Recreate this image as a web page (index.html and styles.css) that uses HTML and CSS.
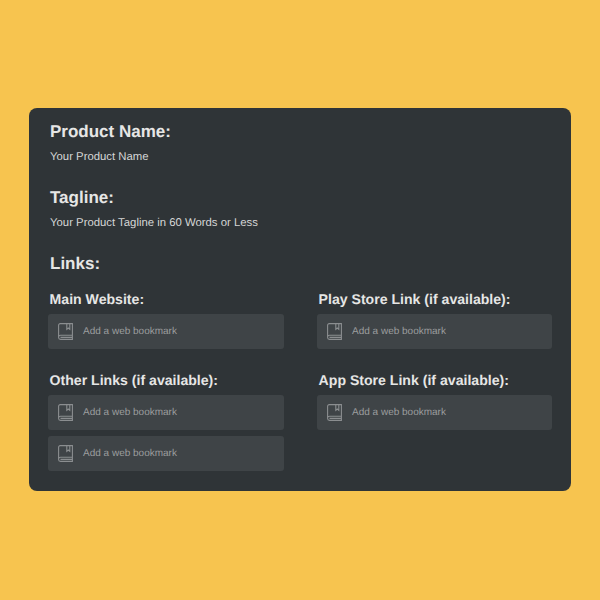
FILE: index.html
```html
<!DOCTYPE html>
<html lang="en">

<head>
    <meta charset="utf-8" />
    <title>Product form</title>
    <link rel="stylesheet" href="styles.css">
</head>

<body>
    <svg class="defs" width="0" height="0">
        <symbol id="book" viewBox="0 0 15 17">
            <path d="M.6 2.200v12.300c0 1.100.8 1.900 1.900 1.900h11.900V.6H2.200C1.300.6.600 1.300.600 2.200zM.6 14.200c0-1.100.8-1.900 1.900-1.900h11.900M2.500 14.400h11.900M8.800.6v5.700l1.500-1.300 1.500 1.300V.6" />
        </symbol>
    </svg>

    <main class="card">
        <section class="block">
            <h2>Product Name:</h2>
            <p>Your Product Name</p>
        </section>
        <section class="block">
            <h2>Tagline:</h2>
            <p>Your Product Tagline in 60 Words or Less</p>
        </section>
        <h2 class="links-title">Links:</h2>
        <div class="links">
            <div class="group">
                <h3>Main Website:</h3>
                <div class="field"><svg class="icon"><use href="#book" /></svg><span>Add a web bookmark</span></div>
            </div>
            <div class="group">
                <h3>Play Store Link (if available):</h3>
                <div class="field"><svg class="icon"><use href="#book" /></svg><span>Add a web bookmark</span></div>
            </div>
            <div class="group">
                <h3>Other Links (if available):</h3>
                <div class="field"><svg class="icon"><use href="#book" /></svg><span>Add a web bookmark</span></div>
                <div class="field"><svg class="icon"><use href="#book" /></svg><span>Add a web bookmark</span></div>
            </div>
            <div class="group">
                <h3>App Store Link (if available):</h3>
                <div class="field"><svg class="icon"><use href="#book" /></svg><span>Add a web bookmark</span></div>
            </div>
        </div>
    </main>
</body>

</html>
```

FILE: styles.css
```css
html,
body {
    height: 100%;
}

body {
    margin: 0;
    background-color: #f7c44f;
    font-family: "Liberation Sans", Arial, sans-serif;
    text-rendering: geometricPrecision;
    display: flex;
    align-items: center;
    justify-content: center;
}

.defs {
    display: none;
}

.card {
    box-sizing: border-box;
    width: 542px;
    height: 383px;
    margin-top: -1px;
    padding: 14px 19px 0 19px;
    background-color: #2f3437;
    border-radius: 8px;
    color: #e6e6e5;
}

h2 {
    font-size: 17px;
    line-height: 20px;
    font-weight: bold;
    margin: 0 0 0 2px;
}

h3 {
    font-size: 14.100px;
    line-height: 16px;
    font-weight: bold;
    margin: 0 0 7px 1.600px;
}

.block {
    height: 66px;
}

.block p {
    font-size: 11.350px;
    line-height: 14px;
    margin: 8px 0 0 2px;
    color: #d5d6d6;
}

.links-title {
    margin-bottom: 17px;
}

.links {
    display: grid;
    grid-template-columns: 236px 235px;
    column-gap: 33px;
    row-gap: 23px;
}

.group {
    display: flex;
    flex-direction: column;
    gap: 5.500px;
}

.group h3 {
    margin-bottom: 1.500px;
}

.field {
    height: 35px;
    display: flex;
    align-items: center;
    gap: 10px;
    padding-left: 10px;
    background-color: #3f4447;
    border-radius: 3px;
    font-size: 10px;
    color: #9b9d9e;
}

.icon {
    width: 15px;
    height: 17px;
    fill: none;
    stroke: #8b8e90;
    stroke-width: 1.1;
}
```
